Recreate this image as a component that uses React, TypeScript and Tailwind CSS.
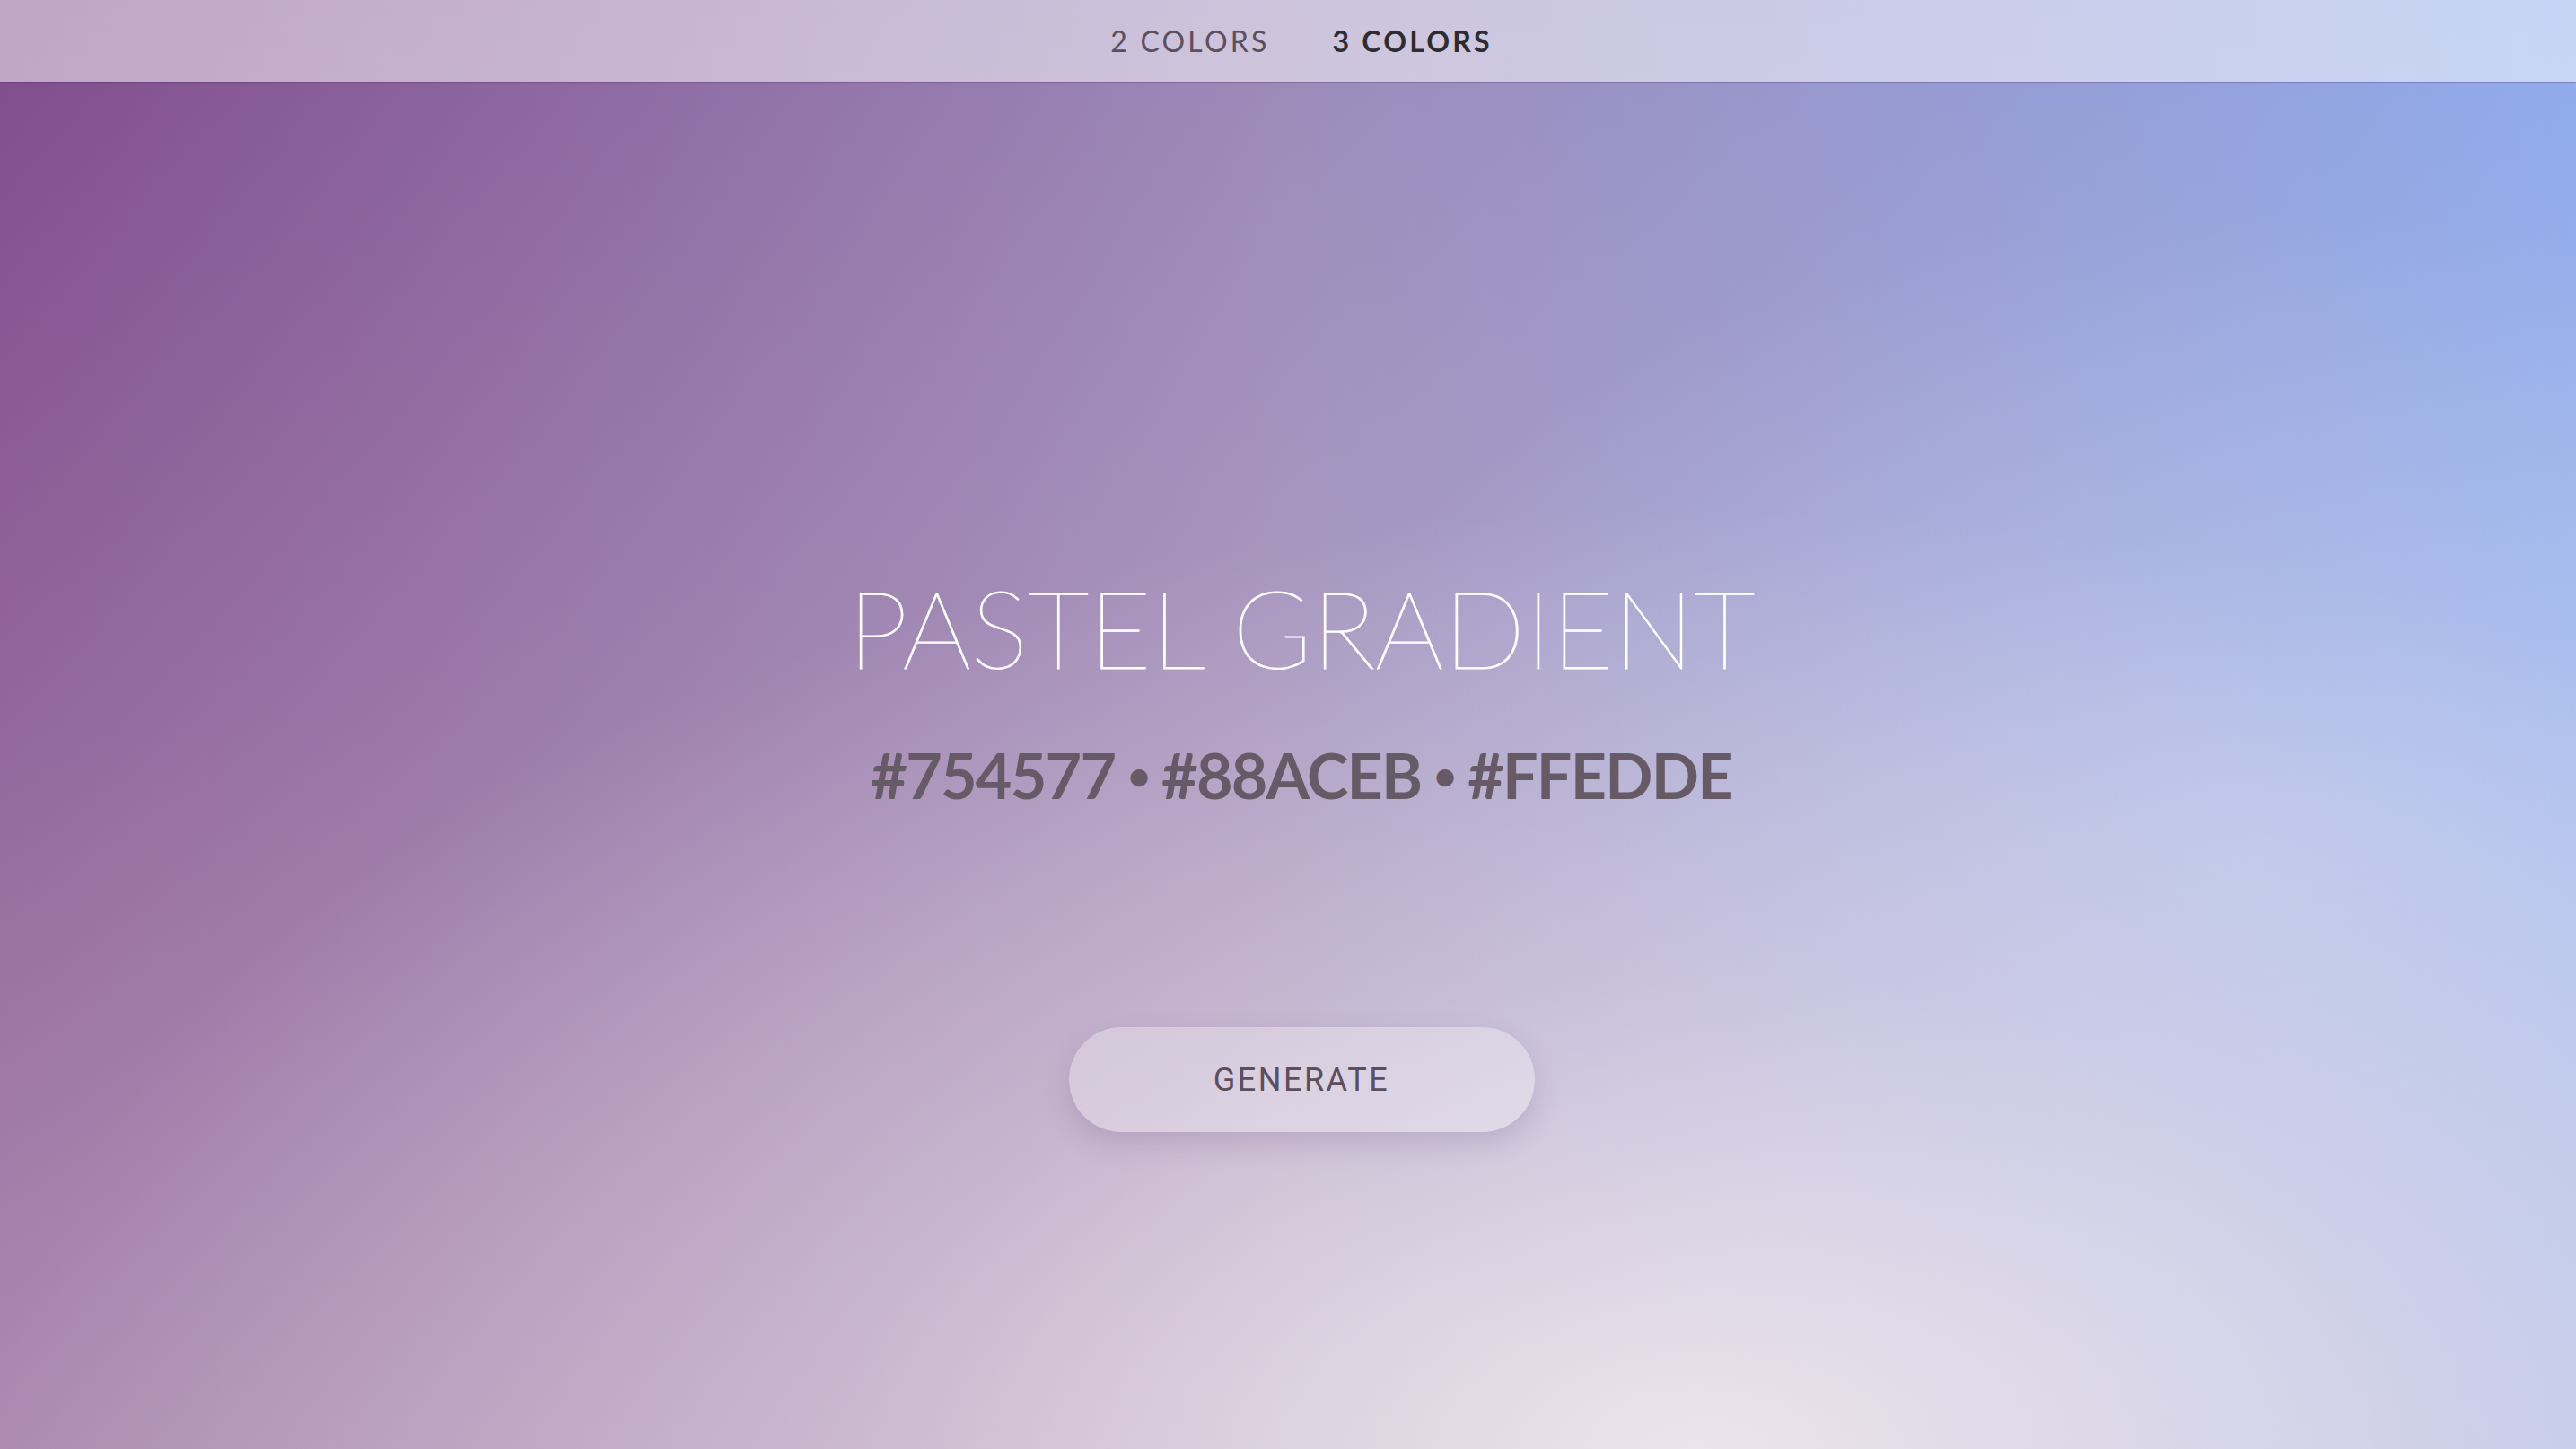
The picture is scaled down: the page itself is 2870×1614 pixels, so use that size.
import { useState } from "react"

const palettes: Record<number, string[]> = {
  2: ["#754577", "#88ACEB"],
  3: ["#754577", "#88ACEB", "#FFEDDE"],
}

function NavBar({ count, onChange }: { count: number; onChange: (n: number) => void }) {
  return (
    <nav className="h-[91px] w-full bg-white/50 shadow-[0_1px_2px_rgba(60,20,80,0.35)] flex items-center justify-center gap-[70px] pl-[30px] font-['Lato','Noto_Sans',sans-serif]">
      {[2, 3].map((n) => (
        <button
          key={n}
          onClick={() => onChange(n)}
          className={
            n === count
              ? "text-[32px] leading-none tracking-[0.1em] font-bold text-[#2e2c31]"
              : "text-[32px] leading-none tracking-[0.1em] font-normal text-[#5c4f5e]"
          }
        >
          {n} COLORS
        </button>
      ))}
    </nav>
  )
}

export default function App() {
  const [count, setCount] = useState(3)
  const colors = palettes[count]

  return (
    <div className="min-h-screen w-full flex flex-col bg-[image:radial-gradient(ellipse_1900px_1050px_at_66%_100%,rgba(248,240,242,0.8)_0%,rgba(248,235,238,0.3)_50%,rgba(255,237,222,0)_100%),radial-gradient(ellipse_1100px_700px_at_88%_58%,rgba(205,218,248,0.45)_0%,rgba(205,218,248,0)_100%),linear-gradient(to_bottom,rgba(240,230,225,0)_0%,rgba(240,230,228,0.18)_50%,rgba(236,228,228,0.42)_100%),linear-gradient(to_right,#7f4b8c_0%,#9b89b9_50%,#8eaaeb_100%)]">
      <NavBar count={count} onChange={setCount} />

      <main className="flex flex-col items-center pt-[548px] pl-[30px]">
        <h1 className="font-['Lato','Noto_Sans',sans-serif] font-extralight text-[120px] leading-none text-white tracking-[-0.002em] [-webkit-text-stroke:1.2px_white]">
          PASTEL GRADIENT
        </h1>
        <p className="mt-[69px] font-['Lato','Noto_Sans',sans-serif] font-bold text-[70px] leading-none tracking-[-0.025em] text-[#675a67] flex items-center">
          {colors.map((c, i) => (
            <span key={c} className="flex items-center">
              {i > 0 && <span className="text-[44px] mx-[14px]">•</span>}
              {c}
            </span>
          ))}
        </p>
        <button className="mt-[246px] w-[519px] h-[117px] rounded-full bg-white/30 shadow-[0_12px_30px_rgba(90,60,110,0.18)] font-['Roboto',sans-serif] text-[36px] tracking-[0.07em] text-[#5b4f5e]">
          GENERATE
        </button>
      </main>
    </div>
  )
}
